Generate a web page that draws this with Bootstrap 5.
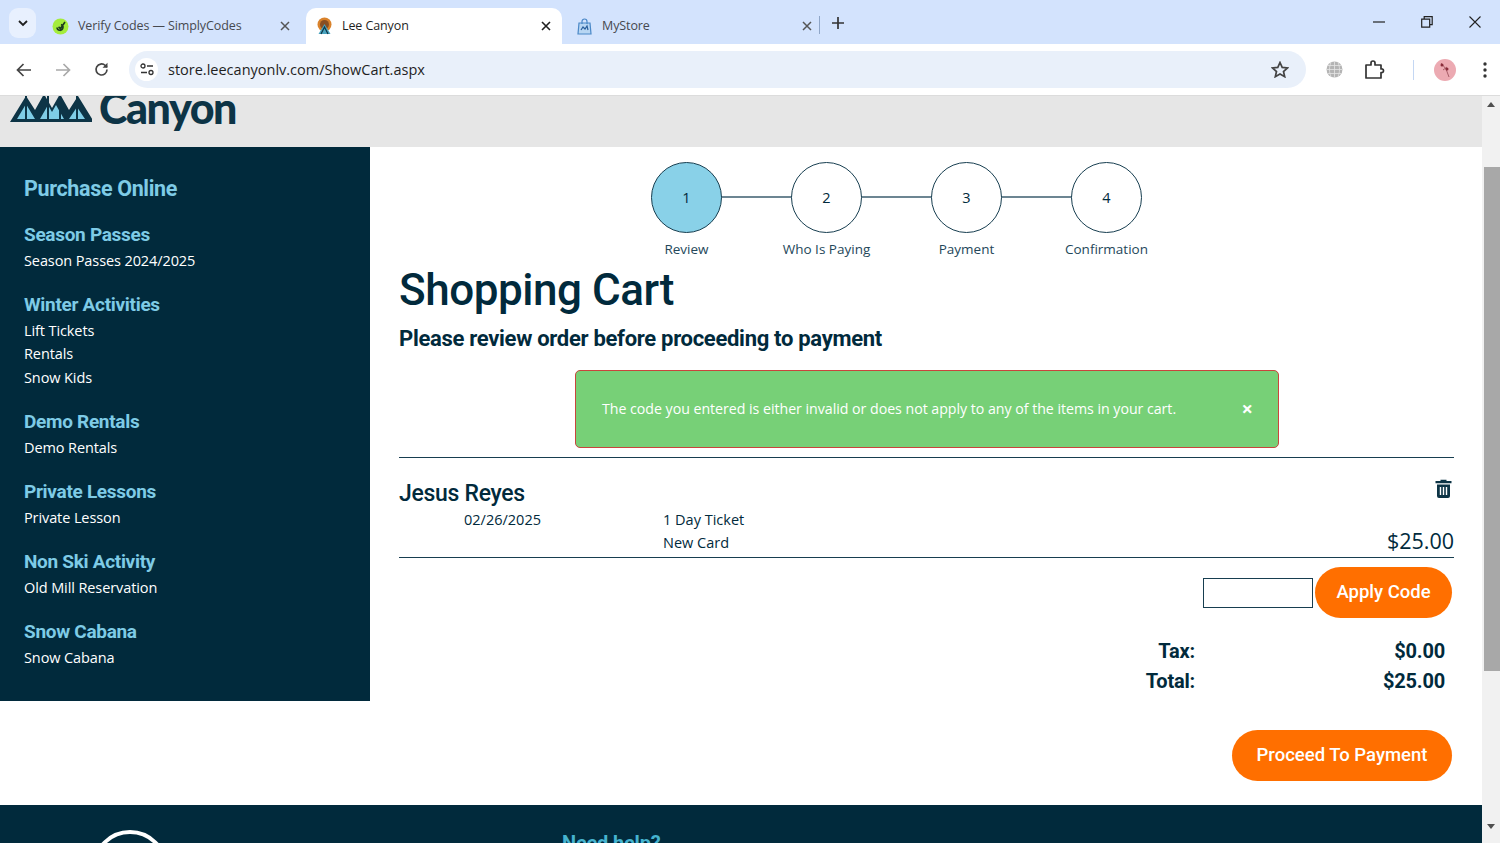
<!DOCTYPE html>
<html lang="en">
<head>
<meta charset="UTF-8">
<title>Lee Canyon</title>
<link href="https://cdn.jsdelivr.net/npm/bootstrap@5.3.0/dist/css/bootstrap.min.css" rel="stylesheet">
<style>
html, body { height: 843px; overflow: hidden; }
body { font-family: "Open Sans", "Liberation Sans", sans-serif; color: #012a3c; background: #fff; }
/* browser chrome */
.tab-strip { height: 44px; background: #d3e3fd; padding-left: 9px; }
.tab-list-btn { width: 27px; height: 30px; margin-top: 8px; border-radius: 9px; background: #e8f0fe; }
.chrome-tab { width: 256px; height: 36px; margin-top: 8px; padding: 0 11px 0 10px; font-size: 12.5px; color: #46494f; letter-spacing: -.1px; }
.chrome-tab.is-active { background: #fff; color: #1f1f1f; border-radius: 10px 10px 0 0; }
.tab-one { margin-left: 8px; width: 262px; padding-left: 8px; padding-right: 16px; }
.tab-two { margin-left: 0; width: 256px; }
.tab-three { width: 264px; padding-left: 14px; padding-right: 14px; }
.tab-title { flex: 1; padding-left: 9px; white-space: nowrap; }
.tab-x { font-size: 0; line-height: 0; }
.tab-divider { width: 1px; height: 18px; background: #8fa6c8; }
.win-ctrls { gap: 36px; padding-right: 19px; }
.toolbar { height: 52px; background: #fff; border-radius: 10px 10px 0 0; margin-top: 0; padding: 0 0 0 16px; border-bottom: 1px solid #dcdcdc; }
.nav-glyphs { gap: 23px; }
.omnibox { width: 1177px; height: 37px; margin-left: 20px; border-radius: 19px; background: #e9f0fa; padding: 0 16px 0 6px; font-size: 14.5px; color: #1f1f1f; }
.site-chip { width: 23px; height: 23px; border-radius: 50%; background: #fff; margin-right: 10px; }
.tool-right { padding-left: 20px; gap: 20px; }
.tool-sep { width: 1px; height: 20px; background: #c4d7f3; }
.avatar-dot { width: 22px; height: 22px; border-radius: 50%; background: #ecaab2; }
/* page */
.view-port { height: 747px; overflow: hidden; }
.page-col { width: 1482px; }
.scroll-rail { width: 18px; background: #f1f1f1; padding-top: 6px; }
.scroll-thumb { height: 504px; background: #a8a8a8; margin-top: 60px; margin-left: 2px; margin-right: 0; }
.scroll-rail-up { margin-left: 5px; width: 0; height: 0; border-left: 4px solid transparent; border-right: 4px solid transparent; border-bottom: 5px solid #505050; }
.scroll-rail-down { margin: 153px 0 0 5px; width: 0; height: 0; border-left: 4px solid transparent; border-right: 4px solid transparent; border-top: 5px solid #505050; }
.logo-band { height: 51px; background: #e6e6e6; overflow: hidden; padding-left: 10px; }
.logo-mark { margin-top: -7px; }
.logo-word { font-family: "Lato", sans-serif; font-weight: 900; font-size: 43px; line-height: 43px; color: #0d3446; margin: -10px 0 0 7px; letter-spacing: -1.4px; }
.side-nav { width: 370px; height: 554px; background: #012a3c; padding: 29px 24px 0; }
.side-title { font-family: Roboto, sans-serif; font-weight: 700; font-size: 21.5px; line-height: 26px; color: #7ecbe6; margin: 0 0 21px; letter-spacing: -.35px; }
.side-head { font-family: Roboto, sans-serif; font-weight: 700; font-size: 19px; line-height: 24px; color: #7ecbe6; margin: 0; letter-spacing: -.3px; }
.side-group { margin-bottom: 21px; }
.side-link { display: block; color: #fff; text-decoration: none; font-family: "Open Sans", sans-serif; font-size: 14.5px; line-height: 23.2px; letter-spacing: -.1px; }
.side-head + .side-link { margin-top: 2px; }
.main-area { padding: 15px 28px 0 29px; }
.step-row { width: 562px; margin-left: 252px; }
.step-item { width: 140.5px; flex: none; }
.step-dot { width: 71px; height: 71px; border-radius: 50%; border: 1.5px solid #173e50; background: #fff; font-size: 14.5px; z-index: 1; position: relative; }
.step-dot.is-current { background: #89d1e8; }
.step-line { width: 71px; height: 2px; background: #6c8592; flex: none; margin-top: 34px; margin-left: -1px; margin-right: -1px; }
.step-label { font-size: 13.5px; margin-top: 7px; line-height: 18px; color: #24475a; white-space: nowrap; }
.step-cell { width: 71px; }
.cart-title { font-family: Roboto, sans-serif; font-weight: 500; font-size: 44px; line-height: 52px; margin: 6px 0 0; letter-spacing: -.45px; }
.cart-sub { font-family: Roboto, sans-serif; font-weight: 700; font-size: 22px; line-height: 28px; margin: 9px 0 0; letter-spacing: -.3px; }
.code-alert { width: 704px; height: 78px; margin: 17px 0 0 176px; background: #77d077; border: 1.5px solid #c9453c; border-radius: 5px; padding: 0 26px; color: #fff; font-size: 14.2px; letter-spacing: -.03px; }
.code-alert-x { color: #fff; font-weight: 700; font-size: 20px; line-height: 1; margin-right: -1px; }
.cart-rule { border-top: 1.5px solid #173e50; }
.cart-block { margin-top: 9px; height: 100px; }
.buyer-name { font-family: Roboto, sans-serif; font-weight: 500; font-size: 23px; line-height: 28px; margin: 22px 0 0; letter-spacing: -.3px; }
.item-date { width: 264px; padding-left: 65px; font-size: 14.5px; line-height: 23px; }
.item-desc { font-size: 14.5px; line-height: 23px; }
.item-price { font-size: 21.5px; line-height: 26px; }
.trash-ico { margin-top: 21px; margin-right: 2px; }
.promo-box { width: 110px; height: 30px; border: 1.5px solid #173e50; background: #fff; border-radius: 0; padding: 0; }
.pill-btn { background: #ff6f00; color: #fff; border: 0; border-radius: 26px; font-family: Roboto, sans-serif; font-weight: 500; }
.pill-btn:hover { background: #ff6f00; color: #fff; }
.apply-btn { width: 137px; height: 51px; font-size: 18.5px; margin-left: 2px; }
.promo-row { padding-top: 9px; padding-right: 2px; }
.sum-row { font-family: Roboto, sans-serif; font-weight: 700; font-size: 20px; line-height: 30px; letter-spacing: -.2px; }
.sum-name { width: 120px; text-align: right; }
.sum-val { width: 259px; text-align: right; padding-right: 9px; }
.sum-block { margin-top: 18px; }
.proceed-btn { width: 220px; height: 51px; font-size: 18.5px; margin: 34px 2px 0 0; }
.site-foot { height: 43px; background: #012a3c; margin-top: 24px; overflow: hidden; position: relative; }
.foot-arc { position: absolute; left: 92px; top: 25px; width: 76px; height: 76px; border: 4px solid #fff; border-radius: 50%; }
.foot-help { position: absolute; left: 562px; top: 26px; margin: 0; font-family: Roboto, sans-serif; font-weight: 700; font-size: 20px; line-height: 24px; color: #46b3cf; letter-spacing: -.2px; }
.foot-bar { position: absolute; left: 260px; bottom: 0; width: 176px; height: 2px; background: #7a2a8e; }
.foot-bar-dark { position: absolute; left: 0; right: 0; bottom: 0; height: 1px; background: #2a1c42; }
</style>
</head>
<body>
<div class="tab-strip d-flex align-items-start">
  <div class="tab-list-btn d-flex align-items-center justify-content-center">
    <svg width="10" height="7" viewBox="0 0 10 7"><path d="M1 1l4 4 4-4" fill="none" stroke="#1f1f1f" stroke-width="1.8"/></svg>
  </div>
  <div class="chrome-tab tab-one d-flex align-items-center">
    <svg width="17" height="17" viewBox="0 0 17 17"><circle cx="8.5" cy="8.5" r="8" fill="#a4ec3c"/><path d="M5 9.5a3 3 0 1 0 4-3M6.5 9l2 1.5L13 4" fill="none" stroke="#1c3a20" stroke-width="1.6"/></svg>
    <span class="tab-title">Verify Codes — SimplyCodes</span>
    <svg width="10" height="10" viewBox="0 0 10 10"><path d="M1 1l8 8M9 1l-8 8" stroke="#555" stroke-width="1.5"/></svg>
  </div>
  <div class="chrome-tab tab-two is-active d-flex align-items-center">
    <svg width="17" height="18" viewBox="0 0 17 18"><circle cx="8.5" cy="7.5" r="7" fill="#d9822b"/><circle cx="8.5" cy="7.5" r="4.5" fill="#8a4f22"/><path d="M2.5 17L8.5 7l6 10z" fill="#4aa4c0"/><path d="M5 17l3.500-7 3.500 7" fill="none" stroke="#0d3446" stroke-width="1.200"/></svg>
    <span class="tab-title">Lee Canyon</span>
    <svg width="10" height="10" viewBox="0 0 10 10"><path d="M1 1l8 8M9 1l-8 8" stroke="#1f1f1f" stroke-width="1.6"/></svg>
  </div>
  <div class="chrome-tab tab-three d-flex align-items-center">
    <svg width="17" height="17" viewBox="0 0 17 17"><path d="M3 5h11l1 11H2z" fill="#b8d6f3" stroke="#4a88c7" stroke-width="1.2"/><path d="M6 6V3.500a2.500 2.500 0 0 1 5 0V6" fill="none" stroke="#4a88c7" stroke-width="1.2"/><path d="M5 12l2-3 2 2 2-3 1 4" fill="none" stroke="#2a5f9c" stroke-width="1.200"/></svg>
    <span class="tab-title">MyStore</span>
    <svg width="10" height="10" viewBox="0 0 10 10"><path d="M1 1l8 8M9 1l-8 8" stroke="#555" stroke-width="1.5"/></svg>
  </div>
  <div class="tab-divider mt-3 flex-none" style="margin-left:-7px"></div>
  <div class="ms-2 mt-2 d-flex align-items-center" style="height:30px;padding-left:4px">
    <svg width="12" height="12" viewBox="0 0 12 12"><path d="M6 0v12M0 6h12" stroke="#333" stroke-width="1.700"/></svg>
  </div>
  <div class="ms-auto win-ctrls d-flex align-items-center" style="height:44px">
    <svg width="12" height="2" viewBox="0 0 12 2"><path d="M0 1h12" stroke="#222" stroke-width="1.200"/></svg>
    <svg width="12" height="12" viewBox="0 0 12 12"><path d="M.7 3.200h8v8h-8zM3.200 3V.7h8v8H9" fill="none" stroke="#222" stroke-width="1.200"/></svg>
    <svg width="12" height="12" viewBox="0 0 12 12"><path d="M.5.5l11 11M11.500.5l-11 11" stroke="#222" stroke-width="1.100"/></svg>
  </div>
</div>
<div class="toolbar d-flex align-items-center">
  <div class="nav-glyphs d-flex align-items-center">
    <svg width="16" height="14" viewBox="0 0 16 14"><path d="M15 7H2M7.500 1L1.500 7l6 6" fill="none" stroke="#444" stroke-width="1.700"/></svg>
    <svg width="16" height="14" viewBox="0 0 16 14"><path d="M1 7h13M8.500 1l6 6-6 6" fill="none" stroke="#a9a9a9" stroke-width="1.700"/></svg>
    <svg width="15" height="15" viewBox="0 0 15 15"><path d="M13 7.500a5.500 5.500 0 1 1-1.700-4L13 5" fill="none" stroke="#444" stroke-width="1.700"/><path d="M13.500.8v5h-5z" fill="#444"/></svg>
  </div>
  <div class="omnibox d-flex align-items-center">
    <div class="site-chip d-flex align-items-center justify-content-center">
      <svg width="14" height="13" viewBox="0 0 14 13"><circle cx="3" cy="3" r="2" fill="none" stroke="#333" stroke-width="1.300"/><path d="M7 3h6M1 9.500h6" stroke="#333" stroke-width="1.300"/><circle cx="11" cy="9.500" r="2" fill="none" stroke="#333" stroke-width="1.300"/></svg>
    </div>
    <span>store.leecanyonlv.com/ShowCart.aspx</span>
    <svg class="ms-auto" width="18" height="17" viewBox="0 0 18 17" style="margin-right:1px"><path d="M9 1.500l2.200 4.900 5.300.6-4 3.500 1.200 5.200L9 13l-4.700 2.700 1.200-5.200-4-3.500 5.300-.6z" fill="none" stroke="#444" stroke-width="1.700"/></svg>
  </div>
  <div class="tool-right d-flex align-items-center">
    <svg width="17" height="17" viewBox="0 0 17 17"><circle cx="8.500" cy="8.500" r="8" fill="#b4b4b4"/><path d="M.5 8.500h16M2 4.500h13M2 12.500h13M8.500.5v16M5 1.500c-2 4-2 10 0 14M12 1.500c2 4 2 10 0 14" fill="none" stroke="#e4e4e4" stroke-width=".8"/></svg>
    <svg width="21" height="20" viewBox="0 0 21 20" style="margin-left:1px"><path d="M2 5h5V3a2 2 0 0 1 4 0v2h6v4h1.500a2 2 0 0 1 0 3.500H17V18H2z" fill="none" stroke="#333" stroke-width="1.700" stroke-linejoin="round"/></svg>
    <div class="tool-sep ms-2"></div>
    <div class="avatar-dot d-flex align-items-center justify-content-center">
      <svg width="14" height="16" viewBox="0 0 14 16"><path d="M3 1l5 6 3 8M5 8l4-3" fill="none" stroke="#a85d68" stroke-width="1"/><circle cx="4" cy="3" r="1.500" fill="#8a2c3a"/><circle cx="9" cy="7" r="1.500" fill="#8a2c3a"/></svg>
    </div>
    <svg width="4" height="16" viewBox="0 0 4 16" style="margin-left:7px"><circle cx="2" cy="2" r="1.700" fill="#333"/><circle cx="2" cy="8" r="1.700" fill="#333"/><circle cx="2" cy="14" r="1.700" fill="#333"/></svg>
  </div>
</div>

<div class="view-port d-flex">
  <div class="page-col">
    <div class="logo-band d-flex align-items-start">
      <svg class="logo-mark" width="82" height="34" viewBox="0 0 82 34">
        <path d="M0 33L16 7l9 14 9-16 8 14 8-14 9 16 9-14 16 26z" fill="#0d3446"/>
        <path d="M7 30l9-15 9 15zM30 30l8-14 4 7 4-7 8 14zM59 30l8-12 8 12z" fill="#7fcde6"/>
        <path d="M16 7v23M38 5v25M50 5v25M67 7v23" stroke="#0d3446" stroke-width="2"/>
      </svg>
      <span class="logo-word">Canyon</span>
    </div>
    <div class="d-flex">
      <nav class="side-nav flex-shrink-0">
        <h2 class="side-title">Purchase Online</h2>
        <div class="side-group"><h3 class="side-head">Season Passes</h3><a class="side-link" href="#">Season Passes 2024/2025</a></div>
        <div class="side-group"><h3 class="side-head">Winter Activities</h3><a class="side-link" href="#">Lift Tickets</a><a class="side-link" href="#">Rentals</a><a class="side-link" href="#">Snow Kids</a></div>
        <div class="side-group"><h3 class="side-head">Demo Rentals</h3><a class="side-link" href="#">Demo Rentals</a></div>
        <div class="side-group"><h3 class="side-head">Private Lessons</h3><a class="side-link" href="#">Private Lesson</a></div>
        <div class="side-group"><h3 class="side-head">Non Ski Activity</h3><a class="side-link" href="#">Old Mill Reservation</a></div>
        <div class="side-group"><h3 class="side-head">Snow Cabana</h3><a class="side-link" href="#">Snow Cabana</a></div>
      </nav>
      <main class="main-area flex-grow-1">
        <div class="step-row d-flex">
          <div class="step-cell d-flex flex-column align-items-center"><div class="step-dot is-current d-flex align-items-center justify-content-center">1</div><div class="step-label">Review</div></div>
          <div class="step-line"></div>
          <div class="step-cell d-flex flex-column align-items-center"><div class="step-dot d-flex align-items-center justify-content-center">2</div><div class="step-label">Who Is Paying</div></div>
          <div class="step-line"></div>
          <div class="step-cell d-flex flex-column align-items-center"><div class="step-dot d-flex align-items-center justify-content-center">3</div><div class="step-label">Payment</div></div>
          <div class="step-line"></div>
          <div class="step-cell d-flex flex-column align-items-center"><div class="step-dot d-flex align-items-center justify-content-center">4</div><div class="step-label">Confirmation</div></div>
        </div>
        <h1 class="cart-title">Shopping Cart</h1>
        <h2 class="cart-sub">Please review order before proceeding to payment</h2>
        <div class="code-alert d-flex align-items-center justify-content-between">
          <span>The code you entered is either invalid or does not apply to any of the items in your cart.</span>
          <span class="code-alert-x">×</span>
        </div>
        <div class="cart-block cart-rule d-flex flex-column">
          <div class="d-flex justify-content-between align-items-start">
            <h3 class="buyer-name">Jesus Reyes</h3>
            <svg class="trash-ico" width="17" height="19" viewBox="0 0 17 19"><path d="M5.500 2V.8h6V2H16.500v2.200H.5V2zM2 5.500h13V17a2 2 0 0 1-2 2H4a2 2 0 0 1-2-2z" fill="#0d3446"/><path d="M5.500 8v8M8.500 8v8M11.500 8v8" stroke="#fff" stroke-width="1.400"/></svg>
          </div>
          <div class="d-flex">
            <div class="item-date">02/26/2025</div>
            <div class="item-desc">1 Day Ticket<br>New Card</div>
            <div class="item-price ms-auto mt-auto">$25.00</div>
          </div>
        </div>
        <div class="cart-rule promo-row d-flex justify-content-end align-items-center">
          <input class="promo-box" type="text" aria-label="Promo code">
          <button class="btn pill-btn apply-btn p-0" type="button">Apply Code</button>
        </div>
        <div class="sum-block">
          <div class="sum-row d-flex justify-content-end"><div class="sum-name">Tax:</div><div class="sum-val">$0.00</div></div>
          <div class="sum-row d-flex justify-content-end"><div class="sum-name">Total:</div><div class="sum-val">$25.00</div></div>
        </div>
        <div class="d-flex justify-content-end">
          <button class="btn pill-btn proceed-btn p-0" type="button">Proceed To Payment</button>
        </div>
      </main>
    </div>
    <footer class="site-foot">
      <div class="foot-arc"></div>
      <div class="foot-bar-dark"></div>
      <div class="foot-bar"></div>
      <h4 class="foot-help">Need help?</h4>
    </footer>
  </div>
  <div class="scroll-rail">
    <div class="scroll-rail-up"></div>
    <div class="scroll-thumb"></div>
    <div class="scroll-rail-down"></div>
  </div>
</div>
<script src="https://cdn.jsdelivr.net/npm/bootstrap@5.3.0/dist/js/bootstrap.bundle.min.js"></script>
</body>
</html>
